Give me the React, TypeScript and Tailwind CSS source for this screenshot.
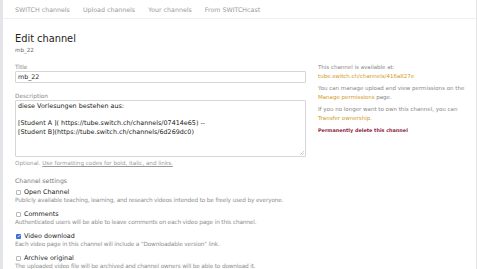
import React from 'react'

const font = { fontFamily: "'DejaVu Sans', 'Liberation Sans', sans-serif" }

const settings = [
  { label: 'Open Channel', help: 'Publicly available teaching, learning, and research videos intended to be freely used by everyone.', checked: false },
  { label: 'Comments', help: 'Authenticated users will be able to leave comments on each video page in this channel.', checked: false },
  { label: 'Video download', help: 'Each video page in this channel will include a "Downloadable version" link.', checked: true },
  { label: 'Archive original', help: 'The uploaded video file will be archived and channel owners will be able to download it.', checked: false },
]

export default function App() {
  return (
    <div className="flex w-[478px] h-[269px] overflow-hidden bg-white" style={font}>
      <div className="w-[3px] shrink-0 bg-[#e4e4e9]" />
      <div className="flex-1 border-r border-[#e6e6e6] mr-[1px] flex flex-col">
        {/* Top nav */}
        <div className="h-[19px] shrink-0 border-b border-[#efefef] flex items-center gap-[13px] pl-[12px] pt-[1px] text-[6.3px] text-[#9a9a9a]">
          <span>SWITCH channels</span>
          <span>Upload channels</span>
          <span>Your channels</span>
          <span>From SWITCHcast</span>
        </div>

        <div className="flex gap-[12px] pl-[12px]">
          {/* Main form */}
          <div className="w-[291px] shrink-0">
            <h1 className="text-[9.8px] leading-[12px] text-[#222] mt-[14px]">Edit channel</h1>
            <div className="text-[5.6px] leading-[8px] text-[#666] mt-[1px]">mb_22</div>

            <div className="mt-[10px] text-[5.8px] leading-[7px] text-[#888]">Title</div>
            <div className="h-[12px] border border-[#d6d6d6] rounded-[1px] flex items-center px-[2px] text-[6.3px] text-[#222]">mb_22</div>

            <div className="mt-[10px] text-[5.8px] leading-[7px] text-[#888]">Description</div>
            <div className="relative h-[57px] border border-[#d6d6d6] rounded-[1px] px-[2px] pt-[1px] text-[6.4px] leading-[8.7px] text-[#222]">
              <div>diese Vorlesungen bestehen aus:</div>
              <div>&nbsp;</div>
              <div>[Student A ]( https://tube.switch.ch/channels/07414e65) --</div>
              <div>[Student B](https://tube.switch.ch/channels/6d269dc0)</div>
              <svg className="absolute right-[1px] bottom-[1px]" width="4" height="4" viewBox="0 0 4 4">
                <path d="M4 0L0 4M4 2L2 4" stroke="#b5b5b5" strokeWidth="0.6" />
              </svg>
            </div>
            <div className="mt-[3px] text-[5.6px] leading-[7px] text-[#999]">
              Optional. <span className="underline">Use formatting codes for bold, italic, and links.</span>
            </div>

            <div className="mt-[10px] text-[6.2px] leading-[8px] text-[#777]">Channel settings</div>
            <div className="flex flex-col gap-[6px] mt-[3px]">
              {settings.map(s => (
                <div key={s.label}>
                  <div className="flex items-center gap-[3px] pl-[1px] text-[6.4px] leading-[8px] text-[#222]">
                    {s.checked ? (
                      <span className="w-[5px] h-[5px] rounded-[1px] bg-[#3d6fd6] flex items-center justify-center">
                        <svg width="4" height="4" viewBox="0 0 4 4"><path d="M0.7 2L1.6 3L3.3 0.9" stroke="#fff" strokeWidth="0.7" fill="none" /></svg>
                      </span>
                    ) : (
                      <span className="w-[5px] h-[5px] rounded-[1px] border border-[#b8b8b8] bg-white" />
                    )}
                    <span>{s.label}</span>
                  </div>
                  <div className="text-[5.8px] tracking-[-0.17px] leading-[8px] text-[#8f8f8f]">{s.help}</div>
                </div>
              ))}
            </div>
          </div>

          {/* Side info */}
          <div className="flex-1 mt-[44px] text-[5.5px] leading-[8.5px] text-[#888]">
            <div>This channel is available at:</div>
            <div className="text-[#d49a22]">tube.switch.ch/channels/416a827e</div>
            <div className="mt-[4px]">You can manage upload and view permissions on the</div>
            <div><span className="text-[#d49a22]">Manage permissions</span> page.</div>
            <div className="mt-[4px]">If you no longer want to own this channel, you can</div>
            <div className="text-[#d49a22]">Transfer ownership.</div>
            <div className="mt-[4px] font-bold text-[4.9px] text-[#8e1f43]">Permanently delete this channel</div>
          </div>
        </div>
      </div>
    </div>
  )
}
